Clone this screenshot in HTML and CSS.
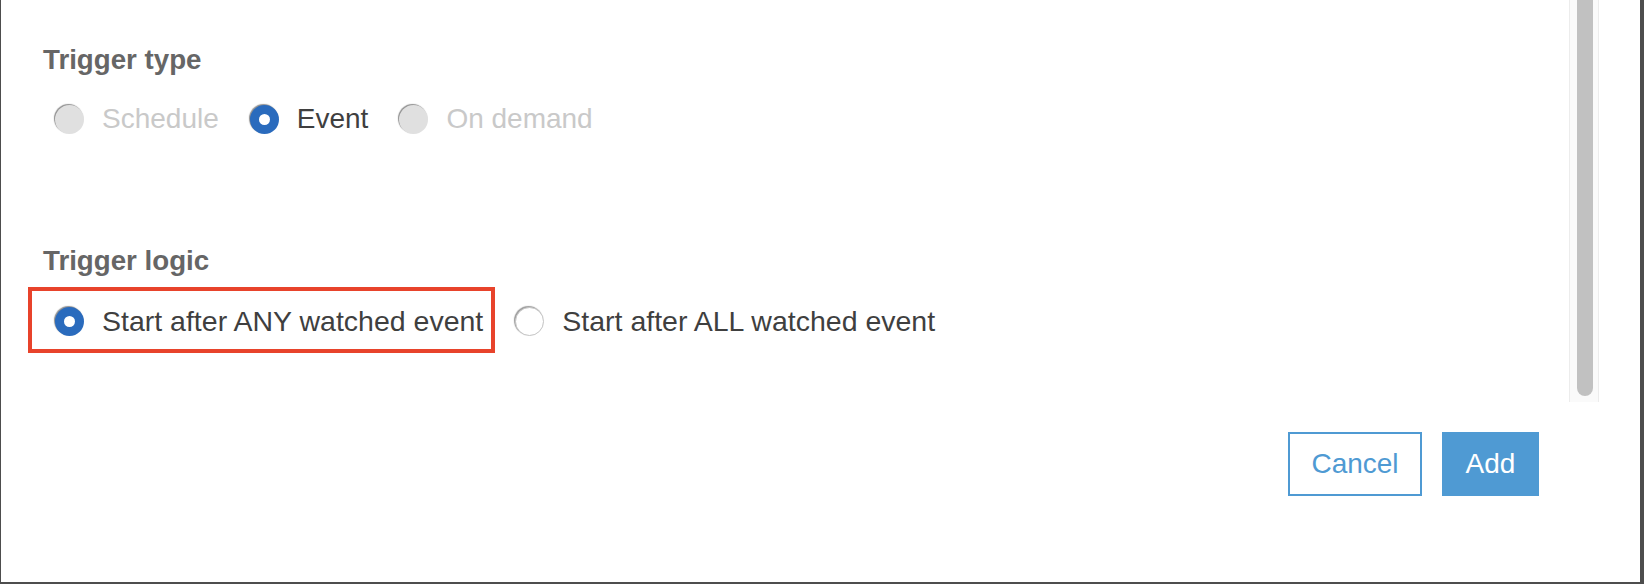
FILE: index.html
```html
<!DOCTYPE html>
<html>
<head>
<meta charset="utf-8">
<link rel="stylesheet" href="styles.css">
</head>
<body>
<div class="dialog">
  <div class="main">
    <div class="content">
      <div class="heading heading-type">Trigger type</div>
      <div class="radio-group">
        <label class="option disabled"><span class="radio"></span><span class="label">Schedule</span></label>
        <label class="option"><span class="radio checked"></span><span class="label">Event</span></label>
        <label class="option disabled"><span class="radio"></span><span class="label">On demand</span></label>
      </div>
      <div class="heading heading-logic">Trigger logic</div>
      <div class="radio-group group-logic">
        <label class="option wide"><span class="radio checked"></span><span class="label">Start after ANY watched event</span></label>
        <label class="option wide"><span class="radio empty"></span><span class="label">Start after ALL watched event</span></label>
      </div>
    </div>
    <div class="scrollbar"><div class="thumb"></div></div>
  </div>
  <div class="footer">
    <button class="btn btn-cancel">Cancel</button>
    <button class="btn btn-add">Add</button>
  </div>
  <div class="highlight"></div>
</div>
</body>
</html>
```
FILE: styles.css
```css
html, body {
  margin: 0;
  padding: 0;
}
body {
  background: #4d4d4d;
  width: 1644px;
  height: 584px;
  overflow: hidden;
  font-family: "Liberation Sans", Arial, Helvetica, sans-serif;
}
.dialog {
  position: relative;
  background: #ffffff;
  margin: 0 4px 0 1px;
  height: 582px;
  display: flex;
  flex-direction: column;
}
.main {
  height: 402px;
  display: flex;
}
.content {
  flex: 1;
  padding-left: 42px;
}
.heading {
  font-weight: bold;
  font-size: 27.7px;
  line-height: 32px;
  color: #666666;
}
.heading-type {
  margin-top: 44px;
}
.heading-logic {
  margin-top: 110px;
}
.radio-group {
  display: flex;
  gap: 31px;
  padding-left: 12px;
  margin-top: 27px;
}
.group-logic {
  margin-top: 28px;
  gap: 32px;
}
.option {
  display: flex;
  align-items: center;
  gap: 18px;
  font-size: 28px;
  line-height: 32px;
  color: #3f3f3f;
}
.option.wide {
  font-size: 28.5px;
}
.option.disabled {
  color: #c9c9c9;
}
.radio {
  width: 29px;
  height: 29px;
  border-radius: 50%;
  box-sizing: border-box;
  background: #e0e0e0;
  box-shadow: -1px -1px 1px 0 #8f8f8f;
  position: relative;
  flex: none;
}
.radio.checked {
  background: #2a6bbd;
}
.radio.checked::after {
  content: "";
  position: absolute;
  left: 9px;
  top: 9px;
  width: 11px;
  height: 11px;
  border-radius: 50%;
  background: #ffffff;
}
.radio.empty {
  background: #ffffff;
  border: 1px solid #c4c4c4;
  box-shadow: -1px -1px 1px 0 #9a9a9a;
}
.scrollbar {
  width: 30px;
  margin-right: 41px;
  box-sizing: border-box;
  background: #fafafa;
  border-left: 1px solid #ececec;
  border-right: 1px solid #ececec;
  padding-left: 7px;
}
.thumb {
  width: 16px;
  height: 396px;
  background: #c1c1c1;
  border-radius: 0 0 8px 8px;
}
.footer {
  display: flex;
  justify-content: flex-end;
  gap: 20px;
  padding-top: 30px;
  padding-right: 101px;
}
.btn {
  height: 64px;
  font-family: "Liberation Sans", Arial, Helvetica, sans-serif;
  font-size: 28px;
  padding: 0;
  box-sizing: border-box;
  cursor: pointer;
}
.btn-cancel {
  width: 134px;
  background: #ffffff;
  color: #4f9ad3;
  border: 2px solid #4f9ad3;
}
.btn-add {
  width: 97px;
  background: #4f9ad3;
  color: #ffffff;
  border: none;
}
.highlight {
  position: absolute;
  left: 27px;
  top: 287px;
  width: 467px;
  height: 66px;
  box-sizing: border-box;
  border: 4px solid #e8432b;
}
```
